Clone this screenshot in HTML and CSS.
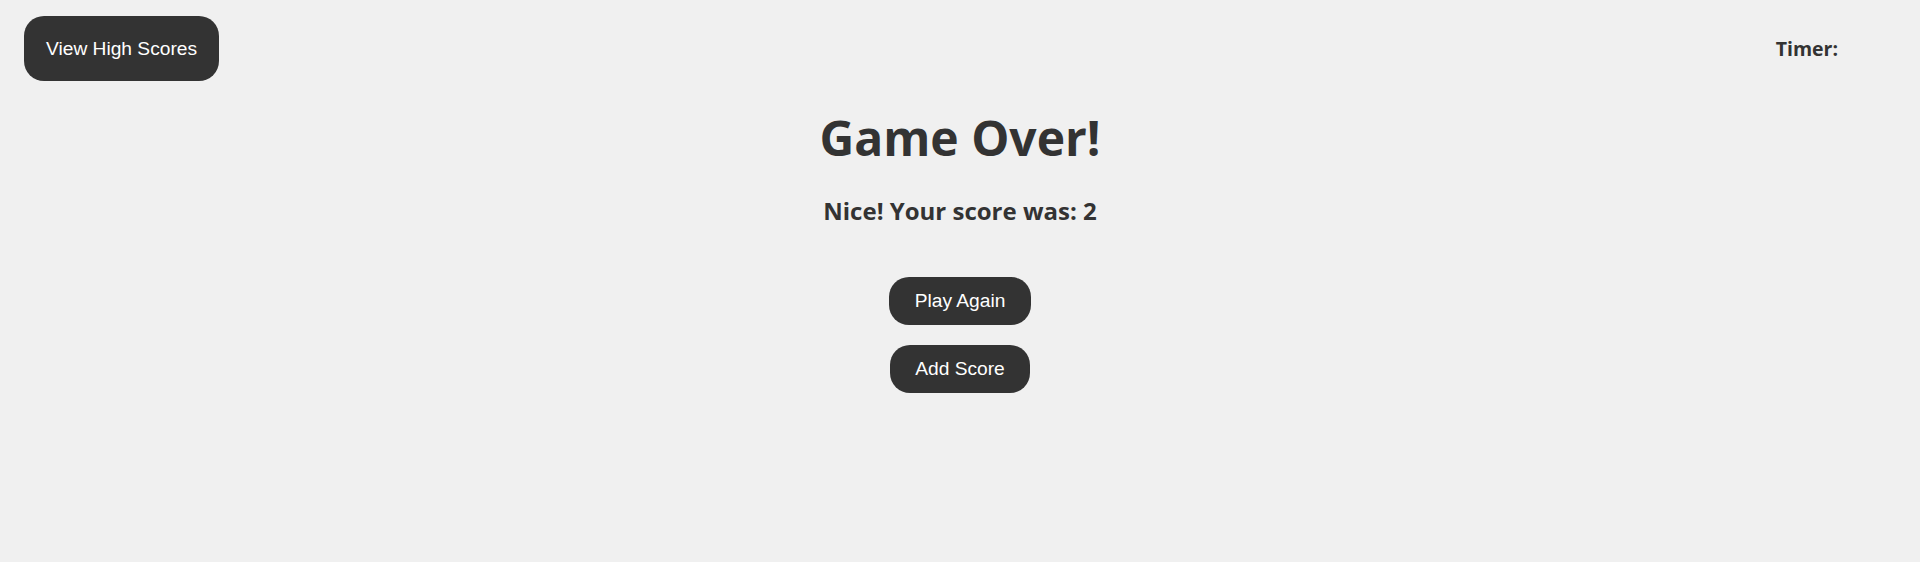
FILE: index.html
```html
<!DOCTYPE html>
<html lang="en">
<head>
<meta charset="utf-8">
<title>Game Over</title>
<link rel="stylesheet" href="styles.css">
</head>
<body>
<header class="top-bar">
  <button class="btn btn-scores">View High Scores</button>
  <div class="timer">Timer: <span class="timer-value"></span></div>
</header>
<main class="end-screen">
  <h1 class="title">Game Over!</h1>
  <h2 class="score-line">Nice! Your score was: 2</h2>
  <div class="actions">
    <button class="btn btn-action btn-play">Play Again</button>
    <button class="btn btn-action">Add Score</button>
  </div>
</main>
</body>
</html>
```
FILE: styles.css
```css
html, body {
  margin: 0;
  padding: 0;
}
body {
  background: #f0f0f0;
  color: #333333;
  font-family: "Open Sans", "Liberation Sans", sans-serif;
  min-height: 562px;
}
.top-bar {
  display: flex;
  justify-content: space-between;
  align-items: center;
  padding: 16px 82px 0 24px;
}
.btn {
  background: #333333;
  color: #ffffff;
  border: none;
  font-family: "Liberation Sans", Arial, sans-serif;
  font-size: 19.2px;
  cursor: pointer;
}
.btn-scores {
  height: 65px;
  padding: 0 22px;
  border-radius: 20px;
}
.timer {
  font-weight: 700;
  font-size: 19.5px;
  line-height: 26px;
}
.end-screen {
  display: flex;
  flex-direction: column;
  align-items: center;
  text-align: center;
}
.title {
  margin: 24px 0 0;
  font-size: 48px;
  line-height: 65px;
  font-weight: 700;
}
.score-line {
  margin: 24px 0 0;
  font-size: 24px;
  line-height: 33px;
  font-weight: 700;
}
.actions {
  margin-top: 50px;
  display: flex;
  flex-direction: column;
  align-items: center;
  gap: 20px;
}
.btn-action {
  height: 48px;
  padding: 0 25px;
  border-radius: 20px;
}
.btn-play {
  padding: 0 26px;
}
```
